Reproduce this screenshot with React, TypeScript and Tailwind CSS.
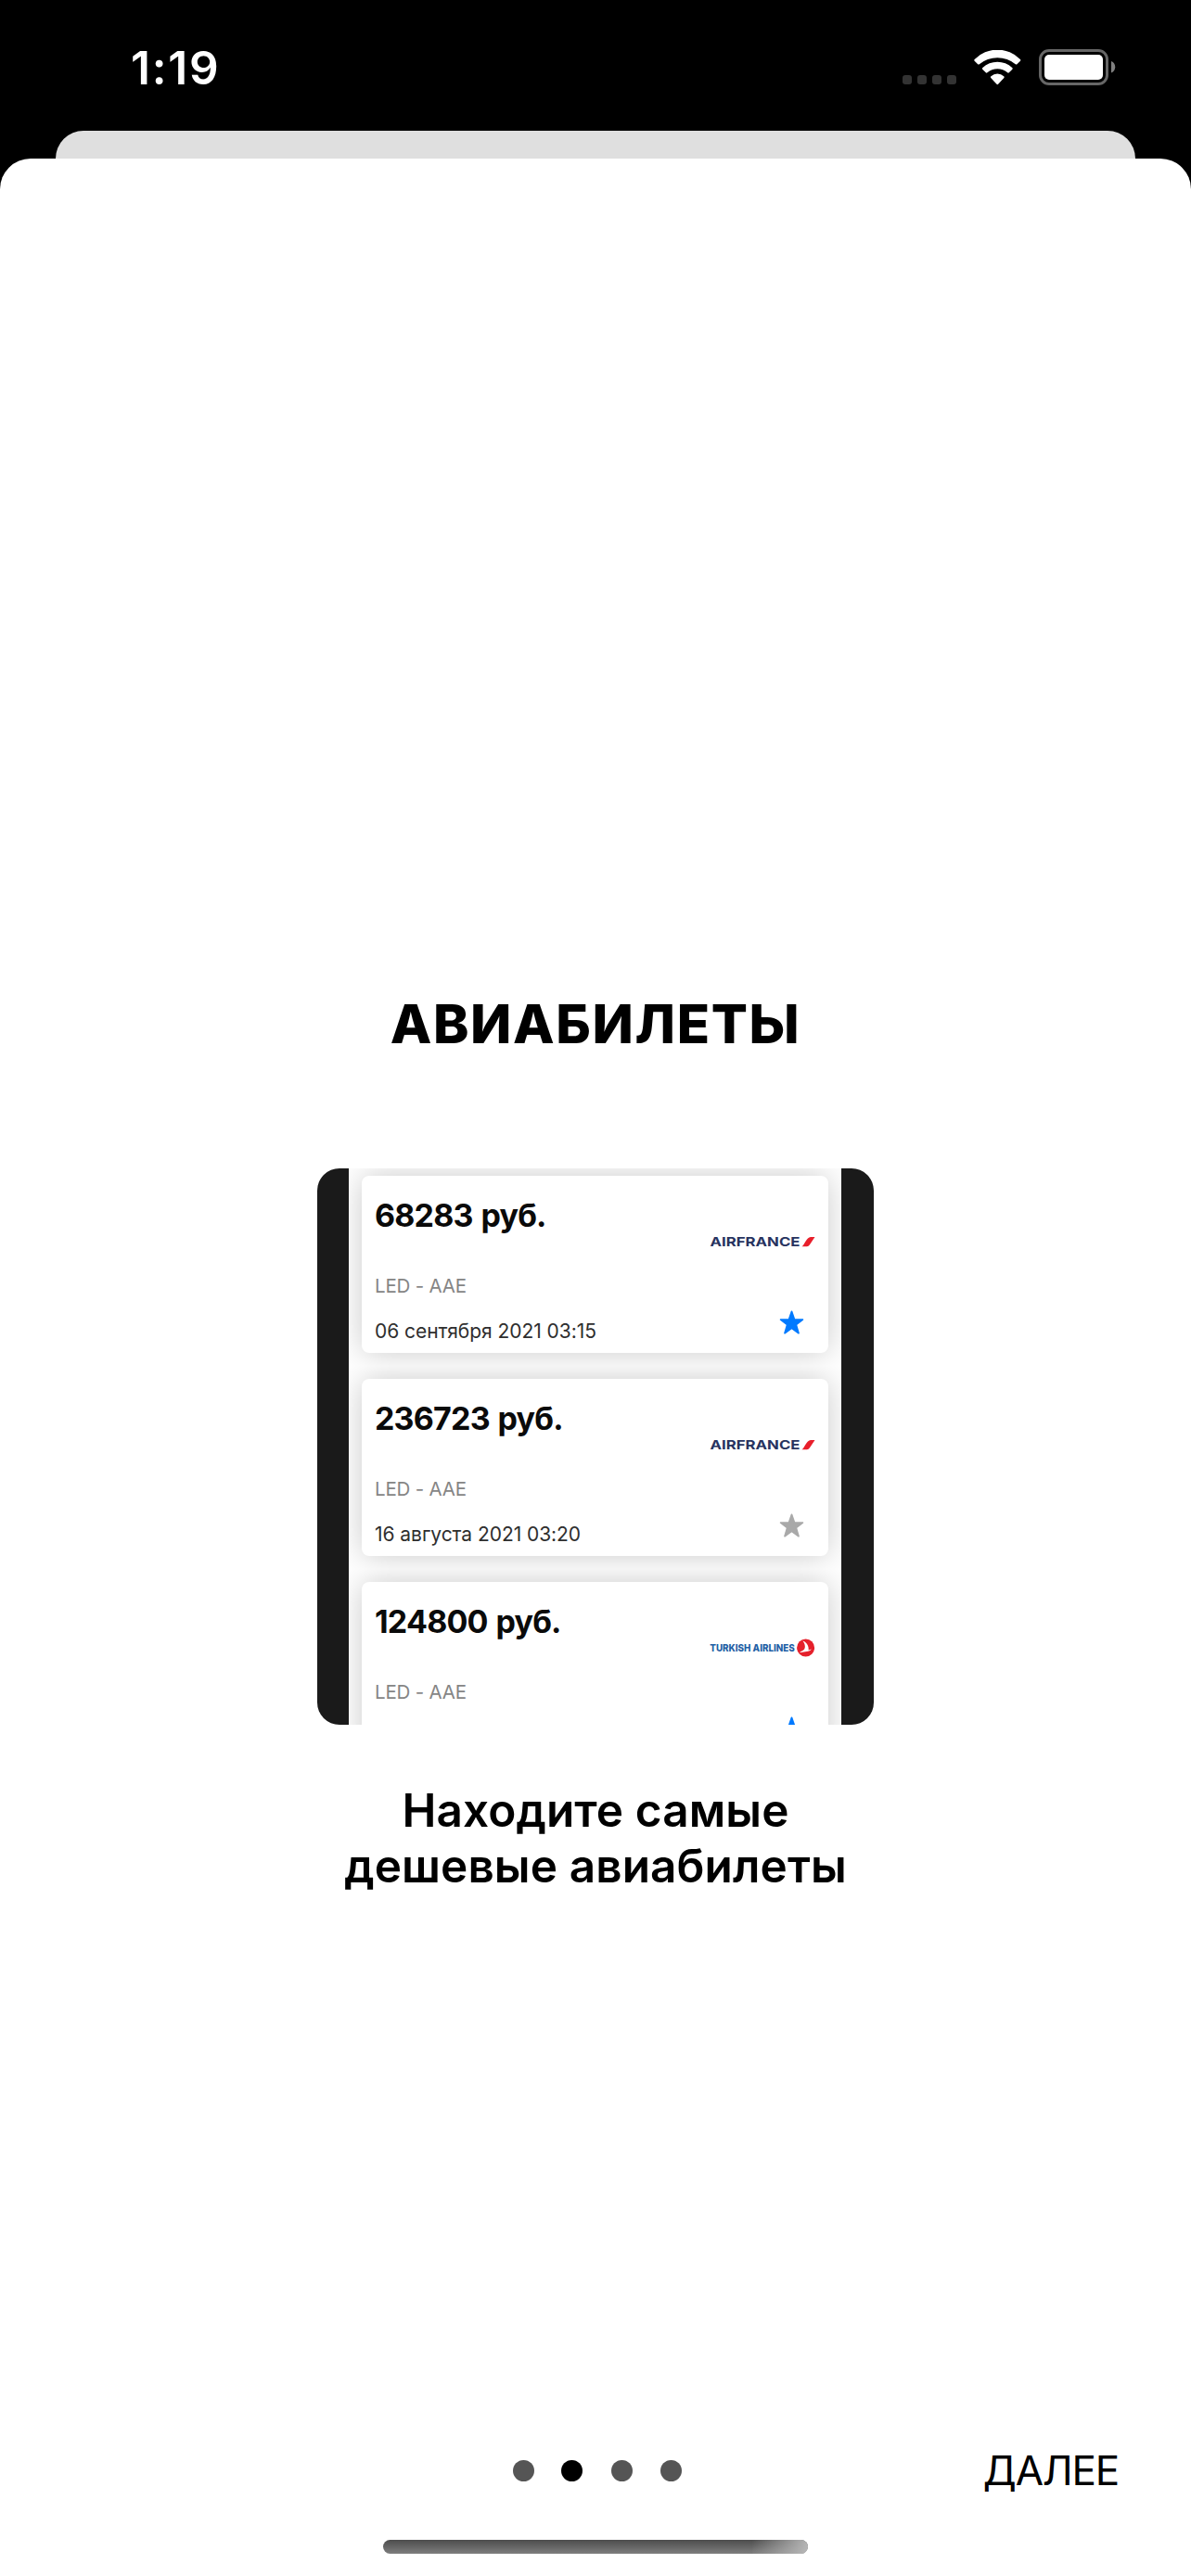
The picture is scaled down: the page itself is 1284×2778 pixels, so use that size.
type Airline = "airfrance" | "turkish";

type Ticket = {
  price: string;
  route: string;
  date: string;
  airline: Airline;
  favorite: boolean;
};

const tickets: Ticket[] = [
  { price: "68283 руб.", route: "LED - AAE", date: "06 сентября 2021 03:15", airline: "airfrance", favorite: true },
  { price: "236723 руб.", route: "LED - AAE", date: "16 августа 2021 03:20", airline: "airfrance", favorite: false },
  { price: "124800 руб.", route: "LED - AAE", date: "", airline: "turkish", favorite: true },
];

function WifiIcon() {
  return (
    <svg className="h-[38px] w-[51px] fill-white" viewBox="0 0 51 38">
      <path d="M.7 9.9A34.6 34.6 0 0 1 49.9 9.9Q50.8 10.8 50 11.7L46.4 15.2Q45.7 16 44.8 15.2A30.6 30.6 0 0 0 5.8 15.2Q4.9 16 4.2 15.2L.6 11.7Q-.2 10.8 .7 9.9Z" />
      <path d="M9.4 19A23.2 23.2 0 0 1 41.2 19Q42.2 19.9 41.4 20.7L37.8 24.3Q37 25.1 36.2 24.3A16.9 16.9 0 0 0 14.4 24.3Q13.6 25.1 12.8 24.3L9.2 20.7Q8.4 19.9 9.4 19Z" />
      <path d="M18.4 28.2A10.5 10.5 0 0 1 32.2 28.2Q33.2 29.1 32.4 29.9L26.1 36.8Q25.3 37.6 24.5 36.8L18.2 29.9Q17.4 29.1 18.4 28.2Z" />
    </svg>
  );
}

function BatteryIcon() {
  return (
    <svg className="h-[39px] w-[83px]" viewBox="0 0 83 39">
      <rect x="1.5" y="1.5" width="72" height="36" rx="9.5" fill="none" stroke="#666" strokeWidth="3" />
      <rect x="6" y="6" width="63" height="27" rx="5" fill="#fff" />
      <path d="M78 13a6.8 6.8 0 0 1 0 12.6Z" fill="#808080" />
    </svg>
  );
}

function StatusBar() {
  return (
    <header className="flex h-[141px] justify-between pl-[141px] pr-[81px] text-white">
      <time className="mt-[43px] h-[60px] text-[49.5px] leading-[60px] font-semibold tracking-[1.8px]">1:19</time>
      <div className="mt-[53px] flex h-[39px] items-start">
        <div className="mt-7 flex gap-1.5">
          {[0, 1, 2, 3].map((i) => (
            <span key={i} className="size-2.5 rounded-[3px] bg-[#333]" />
          ))}
        </div>
        <div className="ml-[19px] mt-px">
          <WifiIcon />
        </div>
        <div className="ml-[19px]">
          <BatteryIcon />
        </div>
      </div>
    </header>
  );
}

function AirlineLogo({ airline }: { airline: Airline }) {
  if (airline === "airfrance") {
    return (
      <svg className="h-5 w-[114px]" viewBox="0 0 114 20">
        <text x="0.5" y="15" fontSize="13.5" fontWeight="700" fill="#27335f" textLength="97" lengthAdjust="spacingAndGlyphs">
          AIRFRANCE
        </text>
        <path d="M99.5 15.2C102 14.4 104.500 5 109 5H113.5L107.8 13.5Q106.7 15.2 105 15.2Z" fill="#e81f2b" />
      </svg>
    );
  }
  return (
    <svg className="h-5 w-[114px]" viewBox="0 0 114 20">
      <text x="0.3" y="14.1" fontSize="10.8" fontWeight="800" fill="#2360a5" textLength="91.5" lengthAdjust="spacingAndGlyphs">
        TURKISH AIRLINES
      </text>
      <circle cx="103.6" cy="10" r="9.5" fill="#e5202b" />
      <path
        d="M100.4 2.6C104.400 4.200 107.200 7.600 106.6 12.4L109.8 11.6Q108.6 13.5 106.2 13.8L97 15.3Q98.2 13.9 100 13.3C103.8 11.4 103.6 6.6 100.4 2.6Z"
        fill="#fff"
      />
    </svg>
  );
}

function Star({ favorite }: { favorite: boolean }) {
  return (
    <svg className={favorite ? "size-[27px] text-[#007aff]" : "size-[27px] text-[#a9a9a9]"} viewBox="0 0 27 27">
      <path
        d="M13.5 1.4L16.5 10H25.4L18.3 15.5L21 24.7L13.5 19.3L6 24.7L8.7 15.5L1.6 10H10.5Z"
        fill="currentColor"
        stroke="currentColor"
        strokeWidth="1.7"
        strokeLinejoin="round"
      />
    </svg>
  );
}

function TicketCell({ ticket }: { ticket: Ticket }) {
  return (
    <li className="h-[219px] shrink-0 overflow-hidden bg-white py-3.5 pl-3.5 pr-[14px]">
      <article className="flex h-[191px] justify-between rounded-lg bg-white px-3.5 shadow-[0_0_34px_rgba(0,0,0,0.21)]">
        <div>
          <h2 className="mt-[23px] h-10 text-[34px] leading-10 font-bold tracking-[-0.8px] [word-spacing:1.5px] text-[#0a0a0a]">{ticket.price}</h2>
          <p className="mt-[43.5px] h-6 text-[20.5px] leading-6 tracking-[-0.2px] text-[#858585]">{ticket.route}</p>
          <p className="mt-[25.5px] h-6 text-[21px] leading-6 tracking-[-0.05px] text-[#2e2e2e]">{ticket.date}</p>
        </div>
        <div className="flex flex-col items-end pt-[61px]">
          <AirlineLogo airline={ticket.airline} />
          <div className="mr-[11.5px] mt-[64px]">
            <Star favorite={ticket.favorite} />
          </div>
        </div>
      </article>
    </li>
  );
}

function TicketsPreview() {
  return (
    <div className="mt-[105px] flex size-[600px] justify-center overflow-hidden rounded-3xl bg-[#1a1a1a] pl-[34px] pr-[35.5px]">
      <ul className="-mt-1.5 flex flex-1 flex-col">
        {tickets.map((ticket) => (
          <TicketCell key={ticket.price} ticket={ticket} />
        ))}
      </ul>
    </div>
  );
}

function PageDots({ active }: { active: number }) {
  return (
    <div className="col-start-2 ml-[3px] flex gap-[30px]">
      {[0, 1, 2, 3].map((i) => (
        <span key={i} className={i === active ? "size-[23px] -translate-x-px rounded-full bg-black" : "size-[23px] rounded-full bg-[#555]"} />
      ))}
    </div>
  );
}

export default function App() {
  return (
    <div className="flex h-[2778px] w-[1284px] flex-col overflow-hidden bg-black font-['Inter',sans-serif] text-black">
      <StatusBar />
      <div className="mx-[60px] h-[60px] shrink-0 rounded-t-[30px] bg-[#dfdfdf]" />
      <main className="-mt-[30px] flex flex-1 flex-col items-center rounded-t-[33px] bg-white">
        <h1 className="mt-[882px] h-[102px] text-[58px] leading-[102px] font-extrabold tracking-[1.63px]">АВИАБИЛЕТЫ</h1>
        <TicketsPreview />
        <p className="mt-[62px] text-center text-[49.5px] leading-[60px] font-[570] tracking-[0.1px]">
          Находите самые
          <br />
          дешевые авиабилеты
        </p>
        <footer className="mt-auto flex w-full flex-col items-center pb-6">
          <nav className="grid w-full grid-cols-[1fr_auto_1fr] items-center">
            <PageDots active={1} />
            <button className="mr-[78px] justify-self-end text-[44px] leading-[60px] tracking-[-1.2px]">ДАЛЕЕ</button>
          </nav>
          <div className="mt-[45px] h-[15px] w-[458px] overflow-hidden rounded-full bg-linear-to-b from-[#4d4d4d] to-[#7e7e7e]">
            <div className="ml-auto h-full w-[60px] bg-[linear-gradient(100deg,transparent,#b8b8b8)]" />
          </div>
        </footer>
      </main>
    </div>
  );
}
